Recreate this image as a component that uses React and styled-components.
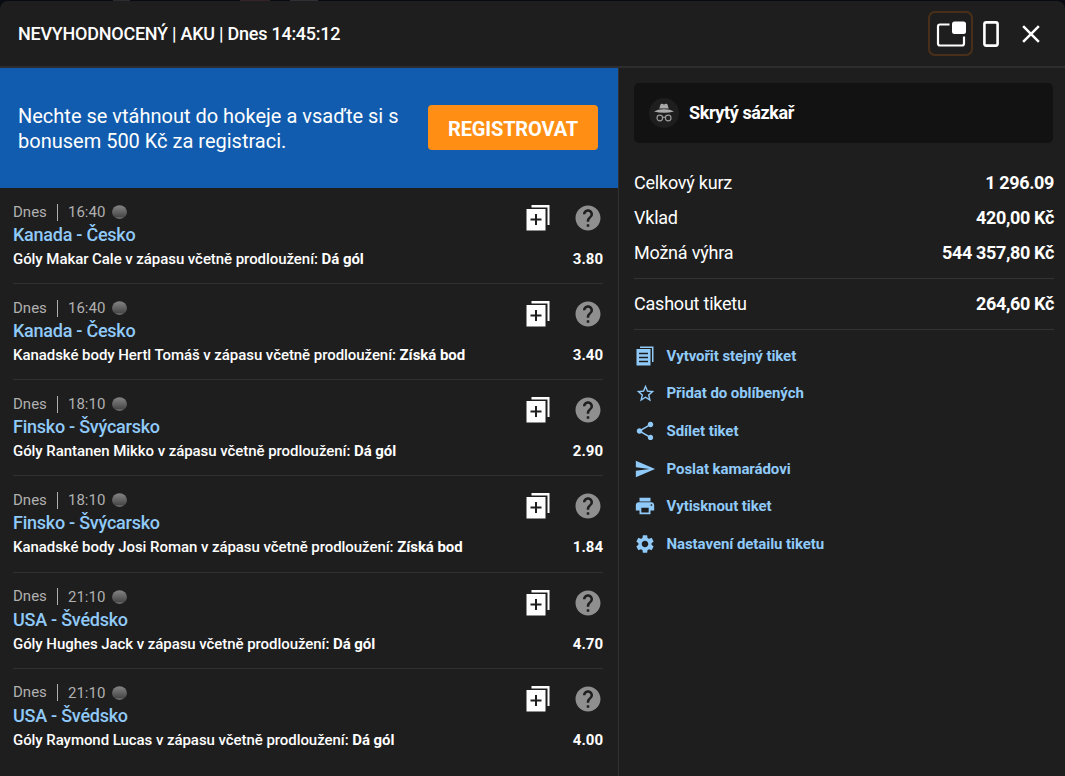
import React from "react";
import styled, { createGlobalStyle } from "styled-components";
import {
  MdClose,
  MdHelp,
  MdPrint,
  MdSend,
  MdSettings,
  MdShare,
  MdStarBorder
} from "react-icons/md";

const bets = [
  { time: "16:40", match: "Kanada - Česko", market: "Góly Makar Cale v zápasu včetně prodloužení:", tip: "Dá gól", odds: "3.80" },
  { time: "16:40", match: "Kanada - Česko", market: "Kanadské body Hertl Tomáš v zápasu včetně prodloužení:", tip: "Získá bod", odds: "3.40" },
  { time: "18:10", match: "Finsko - Švýcarsko", market: "Góly Rantanen Mikko v zápasu včetně prodloužení:", tip: "Dá gól", odds: "2.90" },
  { time: "18:10", match: "Finsko - Švýcarsko", market: "Kanadské body Josi Roman v zápasu včetně prodloužení:", tip: "Získá bod", odds: "1.84" },
  { time: "21:10", match: "USA - Švédsko", market: "Góly Hughes Jack v zápasu včetně prodloužení:", tip: "Dá gól", odds: "4.70" },
  { time: "21:10", match: "USA - Švédsko", market: "Góly Raymond Lucas v zápasu včetně prodloužení:", tip: "Dá gól", odds: "4.00" }
];

const actions = [
  { label: "Vytvořit stejný tiket", icon: <TicketIcon /> },
  { label: "Přidat do oblíbených", icon: <MdStarBorder size={21} /> },
  { label: "Sdílet tiket", icon: <MdShare size={22} /> },
  { label: "Poslat kamarádovi", icon: <MdSend size={22} /> },
  { label: "Vytisknout tiket", icon: <MdPrint size={22} /> },
  { label: "Nastavení detailu tiketu", icon: <MdSettings size={22} /> }
];

function WindowIcon() {
  return (
    <svg width="32" height="28" viewBox="0 0 32 28" fill="none">
      <path d="M14.500 4.500H5A2 2 0 0 0 3 6.500V23.500A2 2 0 0 0 5 25.500H27A2 2 0 0 0 29 23.500V16.500" stroke="#fff" strokeWidth="2.2" />
      <rect x="17" y="1.500" width="14" height="12.500" rx="2.500" fill="#fff" />
    </svg>
  );
}

function PhoneIcon() {
  return (
    <svg width="16" height="26" viewBox="0 0 16 26" fill="none">
      <rect x="1.400" y="1.400" width="13.200" height="23.200" rx="1.800" stroke="#fff" strokeWidth="2.600" />
    </svg>
  );
}

function AddIcon() {
  return (
    <svg width="24" height="26" viewBox="0 0 24 26">
      <path d="M5.500 0H23.500V20H21.500V2.500H5.500Z" fill="#fff" />
      <path d="M0.500 4H19.500V25.500H0.500Z" fill="#fff" />
      <path d="M10 9V20M4.500 14.500H15.500" stroke="#1e1e1e" strokeWidth="2" />
    </svg>
  );
}

function TicketIcon() {
  return (
    <svg width="18" height="20" viewBox="0 0 18 20">
      <path d="M4 0.500H17.500V16H16V2H4Z" fill="currentColor" />
      <path d="M0.500 3H14.500V19.500H0.500Z" fill="currentColor" />
      <path d="M3 7.500H12M3 11.500H12M3 15.500H12" stroke="#1e1e1e" strokeWidth="1.300" />
    </svg>
  );
}

function IncognitoIcon() {
  return (
    <svg width="20" height="20" viewBox="0 0 20 20" fill="none">
      <path d="M5.300 5.500L6.500 1.500Q7 .3 8.200 .8L10 1.400L11.800 .8Q13 .3 13.500 1.500L14.700 5.500Z" fill="#aaa" />
      <path d="M0 8.500Q4.500 6 10 6.300Q15.500 6 20 8.500Q15 9.800 10 9.800Q5 9.800 0 8.500Z" fill="#aaa" />
      <circle cx="5.800" cy="15" r="2.800" stroke="#999" strokeWidth="1.200" />
      <circle cx="14.200" cy="15" r="2.800" stroke="#999" strokeWidth="1.200" />
      <path d="M8.600 14.600Q10 13.800 11.400 14.600" stroke="#999" strokeWidth="1.200" />
    </svg>
  );
}

function PuckIcon() {
  return (
    <svg width="15" height="14" viewBox="0 0 15 14">
      <defs>
        <linearGradient id="puck" x1="0" y1="0" x2="0" y2="1">
          <stop offset="0" stopColor="#858585" />
          <stop offset="0.5" stopColor="#626262" />
          <stop offset="0.850" stopColor="#484848" />
          <stop offset="1" stopColor="#909090" />
        </linearGradient>
      </defs>
      <ellipse cx="7.500" cy="7" rx="7.500" ry="6.800" fill="url(#puck)" />
    </svg>
  );
}

function BetRow({ time, match, market, tip, odds }) {
  return (
    <Bet>
      <BetInfo>
        <Kickoff>
          <Day>Dnes</Day>
          <Time>{time}</Time>
          <PuckIcon />
        </Kickoff>
        <Match>{match}</Match>
        <Market>
          {market} <b>{tip}</b>
        </Market>
      </BetInfo>
      <BetSide>
        <BetIcons>
          <AddIcon />
          <MdHelp size={30} color="#8f8f8f" />
        </BetIcons>
        <Odds>{odds}</Odds>
      </BetSide>
    </Bet>
  );
}

export default function App() {
  return (
    <Page>
      <GlobalStyle />
      <Dialog>
        <Header>
          <Title>NEVYHODNOCENÝ | AKU | Dnes 14:45:12</Title>
          <Tools>
            <ToolButton $active>
              <WindowIcon />
            </ToolButton>
            <ToolButton $width={36}>
              <PhoneIcon />
            </ToolButton>
            <ToolButton $width={43}>
              <MdClose size={30} />
            </ToolButton>
          </Tools>
        </Header>
        <Body>
          <Left>
            <Banner>
              <BannerText>
                Nechte se vtáhnout do hokeje a vsaďte si s<br />
                bonusem 500 Kč za registraci.
              </BannerText>
              <Register>REGISTROVAT</Register>
            </Banner>
            <Bets>
              {bets.map((bet, idx) => (
                <BetRow key={idx} {...bet} />
              ))}
            </Bets>
          </Left>
          <Right>
            <Bettor>
              <Avatar>
                <IncognitoIcon />
              </Avatar>
              <BettorName>Skrytý sázkař</BettorName>
            </Bettor>
            <Summary>
              <SummaryRow>
                Celkový kurz <b>1 296.09</b>
              </SummaryRow>
              <SummaryRow>
                Vklad <b>420,00 Kč</b>
              </SummaryRow>
              <SummaryRow>
                Možná výhra <b>544 357,80 Kč</b>
              </SummaryRow>
            </Summary>
            <Cashout>
              Cashout tiketu <b>264,60 Kč</b>
            </Cashout>
            <Actions>
              {actions.map(({ label, icon }) => (
                <Action key={label}>
                  <ActionIcon>{icon}</ActionIcon>
                  {label}
                </Action>
              ))}
            </Actions>
          </Right>
        </Body>
      </Dialog>
    </Page>
  );
}

const GlobalStyle = createGlobalStyle`
  * {
    box-sizing: border-box;
  }

  body {
    margin: 0;
    background: #080b12;
    font-family: Roboto, sans-serif;
    color: #fff;
  }

  svg {
    display: block;
    flex: none;
  }
`;

const Page = styled.div`
  height: 776px;
  padding-top: 1px;
  overflow: hidden;
  background: linear-gradient(
    90deg,
    #080b12 113px,
    #2b2c30 113px 130px,
    #080b12 130px 240px,
    #35252b 240px 270px,
    #080b12 270px 290px,
    #303034 290px 318px,
    #080b12 318px
  );
`;

const Dialog = styled.div`
  display: flex;
  flex-direction: column;
  height: 775px;
  background: #1e1e1e;
  border-radius: 8px 8px 0 0;
`;

const Header = styled.div`
  display: flex;
  align-items: center;
  justify-content: space-between;
  height: 67px;
  padding: 0 13px 0 18px;
  border-bottom: 2px solid #2d2d2f;
`;

const Title = styled.div`
  font-size: 18px;
  font-weight: 500;
  letter-spacing: -0.25px;
  white-space: nowrap;
`;

const Tools = styled.div`
  display: flex;
  align-items: center;
`;

const ToolButton = styled.button`
  display: flex;
  align-items: center;
  justify-content: center;
  width: ${({ $width }) => $width || 45}px;
  height: 45px;
  padding: 0;
  color: #fff;
  background: none;
  border: 2px solid ${({ $active }) => ($active ? "#4a2f18" : "transparent")};
  border-radius: 7px;
`;

const Body = styled.div`
  display: flex;
  flex: 1;
`;

const Left = styled.div`
  width: 619px;
  border-right: 1px solid #303030;
`;

const Banner = styled.div`
  display: flex;
  align-items: center;
  justify-content: space-between;
  height: 120px;
  padding: 0 20px 0 18px;
  background: #115cae;
`;

const BannerText = styled.div`
  padding-top: 2px;
  font-size: 20px;
  line-height: 25px;
  white-space: nowrap;
`;

const Register = styled.button`
  height: 45px;
  width: 170px;
  margin-bottom: 1px;
  padding: 2px 0 0;
  font-family: inherit;
  font-size: 20px;
  font-weight: 700;
  letter-spacing: -0.15px;
  color: #fff;
  background: #ff8f14;
  border: none;
  border-radius: 4px;
`;

const Bets = styled.div`
  padding: 0 15px 0 13px;
`;

const Bet = styled.div`
  display: flex;
  justify-content: space-between;
  height: 96.15px;
  padding-top: 14px;
  border-bottom: 1px solid #313131;

  &:last-child {
    border-bottom: none;
  }
`;

const BetInfo = styled.div`
  white-space: nowrap;
`;

const Kickoff = styled.div`
  display: flex;
  align-items: center;
  height: 20px;
  font-size: 15px;
  color: #b0b0b0;
`;

const Day = styled.span`
  width: 45px;
  line-height: 17px;
  border-right: 1px solid #b0b0b0;
`;

const Time = styled.span`
  width: 53.5px;
  padding-left: 10px;
`;

const Match = styled.div`
  font-size: 18px;
  font-weight: 500;
  line-height: 26px;
  letter-spacing: -0.25px;
  color: #90caf9;
`;

const Market = styled.div`
  font-size: 15px;
  font-weight: 500;
  line-height: 22px;
  letter-spacing: -0.06px;

  b {
    font-weight: 700;
  }
`;

const BetSide = styled.div`
  display: flex;
  flex-direction: column;
  align-items: flex-end;
`;

const BetIcons = styled.div`
  display: flex;
  align-items: center;
  gap: 23px;
  height: 32px;
`;

const Odds = styled.div`
  margin-top: 14px;
  font-size: 15px;
  font-weight: 700;
  line-height: 22px;
`;

const Right = styled.div`
  flex: 1;
  padding: 15px 11px 0 15px;
`;

const Bettor = styled.div`
  display: flex;
  align-items: center;
  gap: 10px;
  height: 60px;
  margin-right: 1px;
  padding-left: 15px;
  background: #121212;
  border-radius: 5px;
`;

const BettorName = styled.span`
  padding-bottom: 2px;
  font-size: 18px;
  font-weight: 700;
  letter-spacing: -0.38px;
`;

const Avatar = styled.div`
  display: flex;
  align-items: center;
  justify-content: center;
  width: 30px;
  height: 30px;
  background: #1e1e1e;
  border-radius: 50%;
`;

const Summary = styled.div`
  padding: 22px 0 8px;
  border-bottom: 1px solid #343434;
`;

const SummaryRow = styled.div`
  display: flex;
  align-items: center;
  justify-content: space-between;
  height: 35px;
  font-size: 18px;
  letter-spacing: -0.22px;

  b {
    font-weight: 700;
    letter-spacing: -0.35px;
  }
`;

const Cashout = styled(SummaryRow)`
  height: 51px;
  padding-bottom: 2px;
  border-bottom: 1px solid #343434;
`;

const Actions = styled.div`
  padding-top: 7px;
`;

const Action = styled.div`
  display: flex;
  align-items: center;
  gap: 10.5px;
  height: 37.6px;
  font-size: 15px;
  font-weight: 700;
  letter-spacing: -0.07px;
  color: #90caf9;
`;

const ActionIcon = styled.span`
  display: flex;
  align-items: center;
  justify-content: center;
  width: 22px;
`;
